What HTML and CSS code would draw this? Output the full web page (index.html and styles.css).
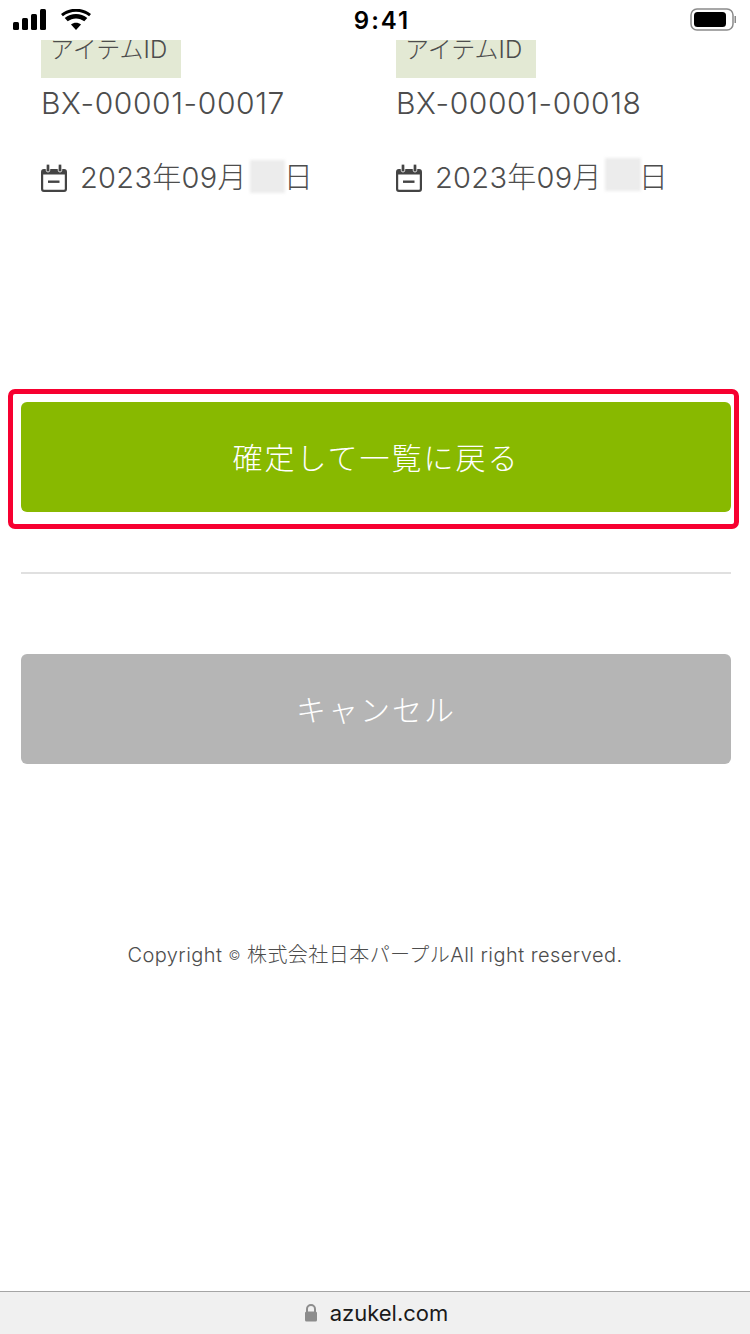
FILE: index.html
```html
<!DOCTYPE html>
<html lang="ja">
<head>
<meta charset="utf-8">
<title>azukel.com</title>
<link rel="stylesheet" href="styles.css">
</head>
<body>
<div class="page">
  <header class="status">
    <div class="status-left">
      <svg class="signal" width="34" height="22" viewBox="0 0 34 22"><rect x="0" y="13" width="6" height="8" rx="1.5"/><rect x="9" y="9" width="6" height="12" rx="1.5"/><rect x="18" y="5" width="6" height="16" rx="1.5"/><rect x="27" y="0" width="6" height="21" rx="1.5"/></svg>
      <svg class="wifi" width="30" height="22" viewBox="0 0 30 22"><path d="M15 21l-5-5.500c2.800-2.400 7.200-2.400 10 0z"/><path d="M6.700 12.300l-3-3.200c6.400-5.500 16.200-5.500 22.600 0l-3 3.200c-4.700-3.900-11.900-3.900-16.600 0z"/><path d="M1.900 7.200l-1.900-2.100c8.400-7.200 21.600-7.200 30 0l-1.900 2.100c-7.400-6-18.800-6-26.200 0z"/></svg>
    </div>
    <div class="clock">9:41</div>
    <div class="status-right">
      <svg width="46" height="24" viewBox="0 0 46 24"><rect x="1" y="1" width="42" height="21" rx="6" fill="none" stroke="#8a8a8a" stroke-width="1.500"/><rect x="4" y="4" width="32" height="15" rx="3.500" fill="#000"/><rect x="44.500" y="8" width="1.500" height="7" fill="#8a8a8a"/></svg>
    </div>
  </header>

  <section class="items">
    <article class="item">
      <div class="label">アイテムID</div>
      <div class="item-id">BX-00001-00017</div>
      <div class="date">
        <svg class="cal" width="28" height="30" viewBox="0 0 28 30"><use href="#calendar"/></svg>
        <span>2023年09月</span><span class="masked"></span><span>日</span>
      </div>
    </article>
    <article class="item">
      <div class="label">アイテムID</div>
      <div class="item-id">BX-00001-00018</div>
      <div class="date">
        <svg class="cal" width="28" height="30" viewBox="0 0 28 30"><use href="#calendar"/></svg>
        <span>2023年09月</span><span class="masked masked-wide"></span><span>日</span>
      </div>
    </article>
  </section>

  <section class="actions">
    <div class="highlight">
      <button class="btn btn-primary">確定して一覧に戻る</button>
    </div>
    <hr class="divider">
    <button class="btn btn-cancel">キャンセル</button>
  </section>

  <footer class="copyright">Copyright <span class="copy-mark">©</span> 株式会社日本パープルAll right reserved.</footer>

  <div class="urlbar">
    <svg width="14" height="18" viewBox="0 0 14 18"><path d="M3 8V5a4 4 0 0 1 8 0v3" fill="none" stroke="#8c8c8c" stroke-width="2"/><rect x="1" y="7.500" width="12" height="10" rx="1.500" fill="#8c8c8c"/></svg>
    <span>azukel.com</span>
  </div>
</div>
<svg class="defs" width="0" height="0"><defs><g id="calendar"><rect x="2.100" y="7.100" width="23.800" height="20.800" rx="1.800" fill="none" stroke="#444" stroke-width="2.200"/><rect x="2" y="7" width="24" height="4.500" fill="#444"/><rect x="6.200" y="1" width="3.600" height="8" rx="1.800" fill="#444" stroke="#fff" stroke-width=".8"/><rect x="18.200" y="1" width="3.600" height="8" rx="1.800" fill="#444" stroke="#fff" stroke-width=".8"/><rect x="8" y="17.500" width="11.500" height="2.400" fill="#444"/></g></defs></svg>
</body>
</html>
```
FILE: styles.css
```css
* { box-sizing: border-box; }
html, body { margin: 0; padding: 0; background: #fff; }
body { font-family: "Inter", "Noto Sans CJK JP", sans-serif; font-weight: 300; color: #4d4d4d; }
.page { width: 750px; height: 1334px; display: flex; flex-direction: column; overflow: hidden; }
.defs { position: absolute; }

.status { height: 40px; flex: none; display: grid; grid-template-columns: 1fr auto 1fr; align-items: start; padding: 8px 14px 0 13px; color: #000; }
.status-left { display: flex; align-items: flex-start; gap: 14px; }
.signal { margin-top: 1px; }
.signal rect, .wifi path { fill: #000; }
.wifi { margin-top: 1px; }
.clock { font: 600 24px/24px "Inter", "Liberation Sans", sans-serif; letter-spacing: 2px; margin: 1px 0 0 15px; }
.status-right { display: flex; justify-content: flex-end; }

.items { height: 182px; flex: none; display: grid; grid-template-columns: 355px 355px; padding-left: 41px; }
.item { display: flex; flex-direction: column; }
.label { width: 140px; height: 38px; background: #e3e9d4; font-size: 24px; line-height: 20px; padding-left: 9px; overflow: hidden; white-space: nowrap; }
.item-id { font-size: 30px; line-height: 50px; letter-spacing: .6px; white-space: nowrap; }
.date { display: flex; align-items: center; font-size: 29px; line-height: 36px; letter-spacing: .3px; margin-top: 32px; white-space: nowrap; }
.cal { margin: 0 12px 0 -1px; }
.masked { width: 35px; height: 33px; background: #ececec; filter: blur(1.500px); margin: -4px -1px 0 3px; }
.masked-wide { width: 36px; margin-top: -8px; margin-right: -2px; }

.actions { flex: none; margin-top: 167px; }
.highlight { width: 731px; margin-left: 8px; border: 5px solid #f70030; border-radius: 7px; padding: 8px 3px 12px 8px; }
.btn { display: block; width: 710px; height: 110px; border: 0; border-radius: 6px; color: #fff; font: 300 30px/1 "Noto Sans CJK JP", sans-serif; letter-spacing: 2px; padding: 0 0 2px; text-align: center; }
.btn-primary { background: #88b900; }
.divider { width: 710px; height: 2px; margin: 43px 0 80px 21px; border: 0; background: #e0e0e0; }
.btn-cancel { background: #b5b5b5; margin-left: 21px; }

.copyright { flex: none; margin-top: 175px; text-align: center; font-size: 20px; line-height: 32px; letter-spacing: .45px; white-space: nowrap; }
.copy-mark { font-size: 13px; vertical-align: 2px; }

.urlbar { margin-top: auto; height: 43px; flex: none; background: #f0f0f0; border-top: 1px solid #a5a5a5; display: flex; align-items: center; justify-content: center; gap: 12px; padding-left: 2px; color: #1a1a1a; font: 400 22px/1 "Inter", "Liberation Sans", sans-serif; }
```
